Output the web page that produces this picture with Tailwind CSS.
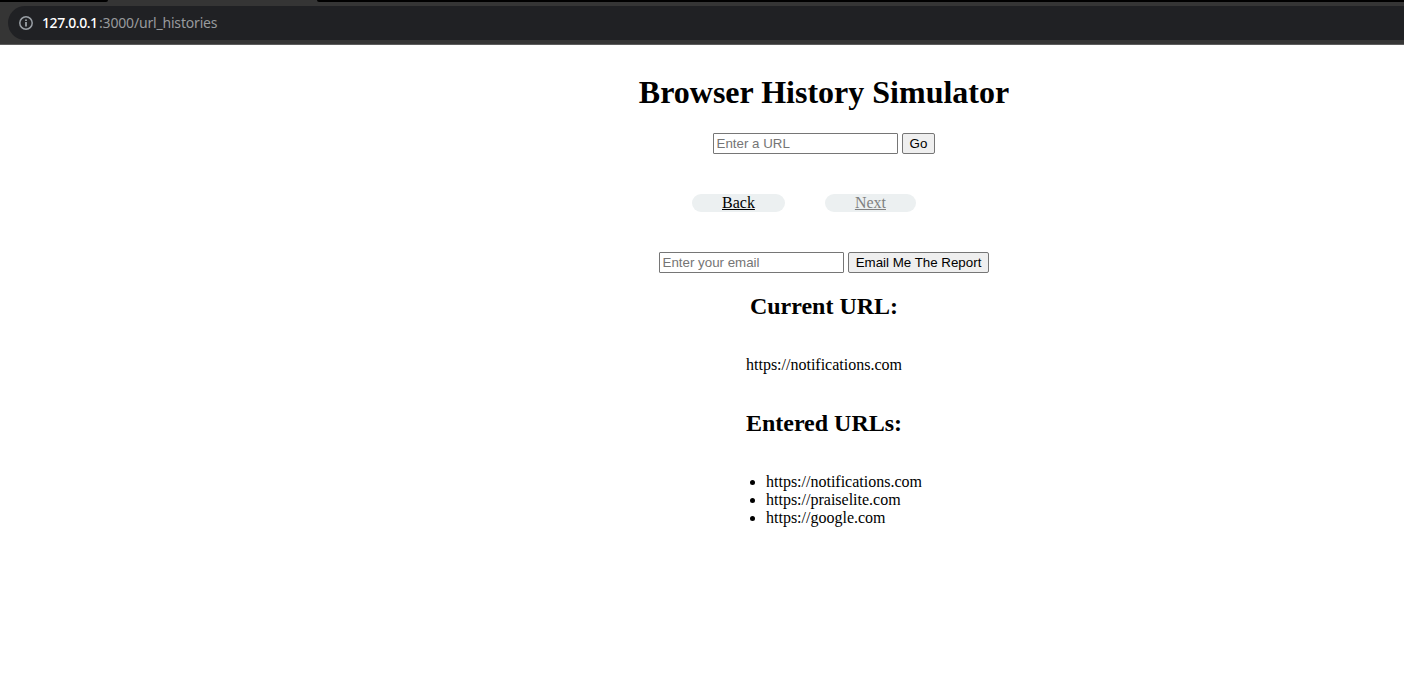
<!DOCTYPE html>
<html lang="en">
<head>
<meta charset="utf-8">
<title>Browser History Simulator</title>
<script src="https://cdn.jsdelivr.net/npm/@tailwindcss/browser@4"></script>
</head>
<body class="h-screen overflow-hidden bg-white text-black">
<header class="flex h-[45px] flex-col border-b border-[#5c5c5c] bg-[#353535]">
  <div class="flex h-[2px] shrink-0">
    <div class="w-[108px] rounded-br-[2px] bg-black"></div>
    <div class="w-[209px]"></div>
    <div class="flex-1 rounded-bl-[2px] bg-black"></div>
  </div>
  <div class="mt-1 ml-2 flex h-[34px] items-center rounded-l-full bg-[#202124] pl-[11px] font-['Noto_Sans',sans-serif] text-[14px] leading-[20px]">
    <svg class="mr-[9px] size-[14px] shrink-0" viewBox="0 0 14 14" fill="none" stroke="#9aa0a6" stroke-width="1.5"><circle cx="7" cy="7" r="6.2"/><path d="M7 6V10.5M7 3.4V5" stroke-width="1.8"/></svg>
    <span class="w-[57px] whitespace-nowrap font-medium tracking-[-0.42px] text-white">127.0.0.1</span><span class="whitespace-nowrap tracking-[-0.18px] text-[#989a9d]">:3000/url_histories</span>
  </div>
</header>
<main class="ml-[244px] flex w-[1160px] flex-col items-center pt-[29px] font-['Liberation_Serif',serif] text-[16px] leading-[18px]">
  <h1 class="text-[32px] leading-[37px] font-bold">Browser History Simulator</h1>
  <form class="mt-[22px] flex gap-1 font-['Liberation_Sans',sans-serif] text-[13.333px] leading-[15px]">
    <input class="h-[21px] w-[185px] rounded-[1px] border border-[#767676] bg-white px-[2.5px] py-0 placeholder:text-[#757575]" placeholder="Enter a URL">
    <button type="button" class="h-[21px] w-[33px] rounded-[2px] border border-[#767676] bg-[#efefef] whitespace-nowrap">Go</button>
  </form>
  <nav class="mt-10 mr-10 flex gap-10">
    <a class="h-[18px] rounded-full bg-[#ecf0f1] px-[30px] underline">Back</a>
    <a class="h-[18px] rounded-full bg-[#ecf0f1] px-[30px] text-[#808080] underline">Next</a>
  </nav>
  <form class="mt-10 flex gap-1 font-['Liberation_Sans',sans-serif] text-[13.333px] leading-[15px]">
    <input class="h-[21px] w-[185px] rounded-[1px] border border-[#767676] bg-white px-[2.5px] py-0 placeholder:text-[#757575]" placeholder="Enter your email">
    <button type="button" class="h-[21px] w-[141px] rounded-[2px] border border-[#767676] bg-[#efefef] whitespace-nowrap">Email Me The Report</button>
  </form>
  <h2 class="mt-5 text-[24px] leading-[27px] font-bold">Current URL:</h2>
  <p class="mt-9">https://notifications.com</p>
  <h2 class="mt-9 text-[24px] leading-[27px] font-bold">Entered URLs:</h2>
  <ul class="mt-9 ml-10 list-disc">
    <li>https://notifications.com</li>
    <li>https://praiselite.com</li>
    <li>https://google.com</li>
  </ul>
</main>
</body>
</html>
